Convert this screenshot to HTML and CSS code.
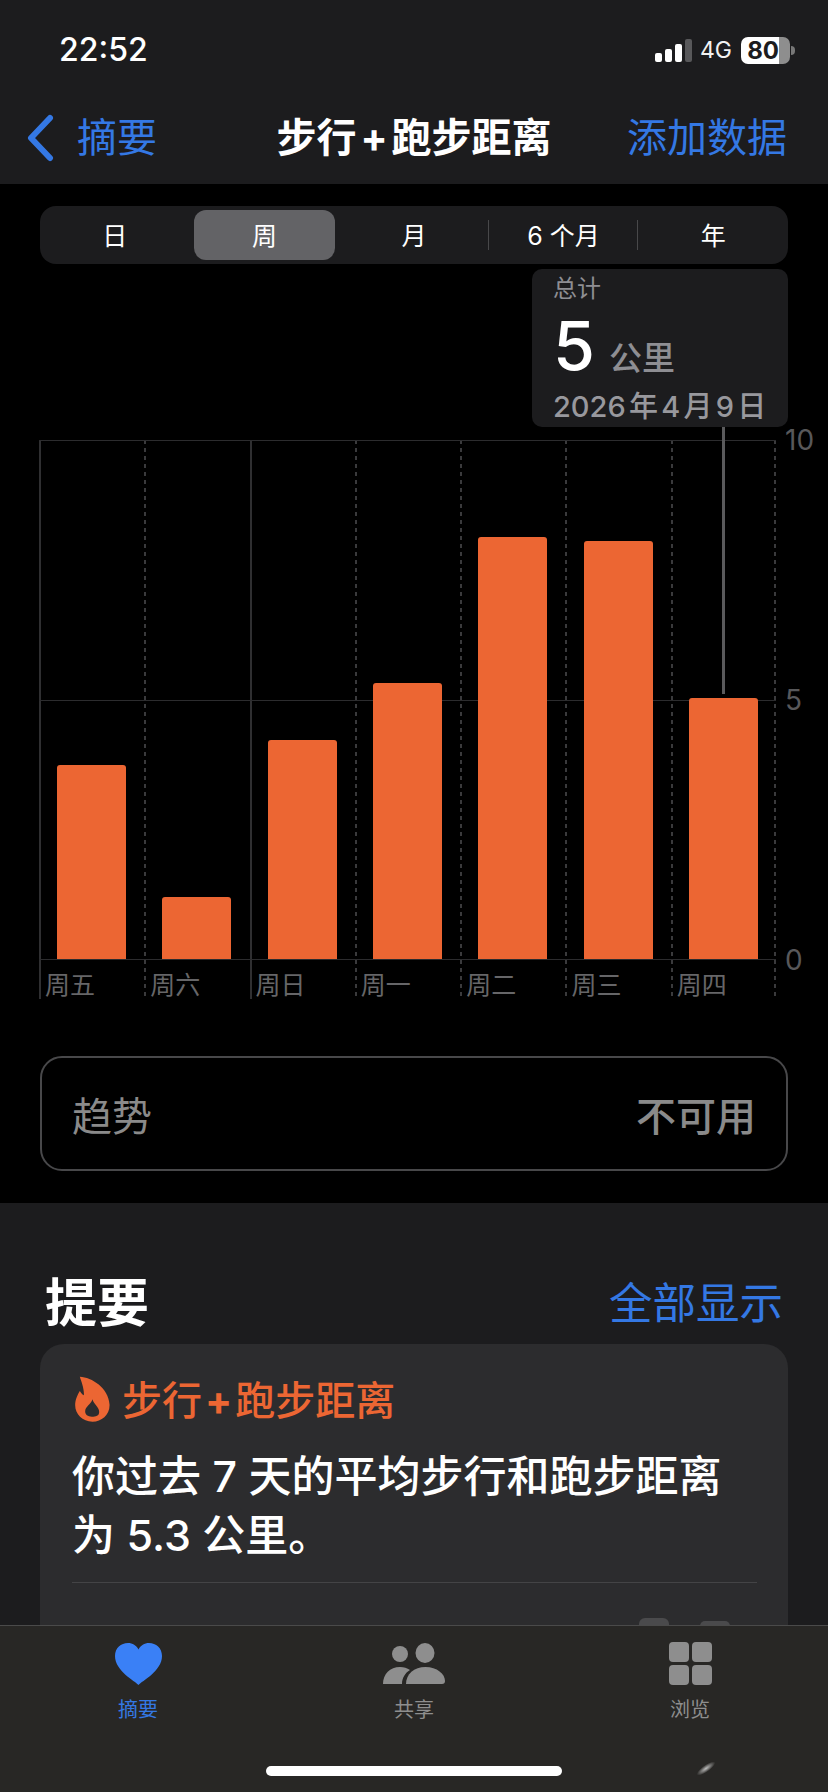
FILE: index.html
```html
<!DOCTYPE html>
<html lang="zh">

<head>
  <title>步行+跑步距离</title>
  <link rel="stylesheet" href="styles.css">
</head>

<body>
  <header class="top-bar">
    <div class="status-bar">
      <span class="clock">22:52</span>
      <div class="status-icons">
        <div class="signal">
          <i class="sig-1"></i>
          <i class="sig-2"></i>
          <i class="sig-3"></i>
          <i class="sig-4"></i>
        </div>
        <span class="network">4G</span>
        <div class="battery">
          <span class="battery-level">80</span>
          <i class="battery-rest"></i>
        </div>
        <i class="battery-nub"></i>
      </div>
    </div>

    <nav class="nav-bar">
      <a class="back-link">
        <svg class="chevron" viewBox="0 0 30 48" width="30" height="48">
          <path d="M25 4 L6 24 L25 44" fill="none" stroke="#3478e4" stroke-width="6" stroke-linecap="round" stroke-linejoin="round" />
        </svg>
        <span>摘要</span>
      </a>
      <h1 class="nav-title">步行<b class="plus">+</b>跑步距离</h1>
      <a class="add-link">添加数据</a>
    </nav>
  </header>

  <main class="chart-section">
    <div class="segments">
      <span class="segment">日</span>
      <span class="segment active">周</span>
      <span class="segment">月</span>
      <span class="segment divided">6 个月</span>
      <span class="segment divided">年</span>
    </div>

    <div class="chart">
      <div class="tooltip">
        <p class="tip-label">总计</p>
        <p class="tip-value"><span class="tip-number">5</span><span class="tip-unit">公里</span></p>
        <p class="tip-date">2026 年 4 月 9 日</p>
      </div>
      <i class="tip-line"></i>

      <div class="plot">
        <div class="day solid">
          <div class="bar-area"><div class="bar" style="height: 194px"></div></div>
          <span class="day-name">周五</span>
        </div>
        <div class="day">
          <div class="bar-area"><div class="bar" style="height: 62px"></div></div>
          <span class="day-name">周六</span>
        </div>
        <div class="day solid">
          <div class="bar-area"><div class="bar" style="height: 219px"></div></div>
          <span class="day-name">周日</span>
        </div>
        <div class="day">
          <div class="bar-area"><div class="bar" style="height: 276px"></div></div>
          <span class="day-name">周一</span>
        </div>
        <div class="day">
          <div class="bar-area"><div class="bar" style="height: 422px"></div></div>
          <span class="day-name">周二</span>
        </div>
        <div class="day">
          <div class="bar-area"><div class="bar" style="height: 418px"></div></div>
          <span class="day-name">周三</span>
        </div>
        <div class="day last">
          <div class="bar-area"><div class="bar" style="height: 261px"></div></div>
          <span class="day-name">周四</span>
        </div>
      </div>

      <div class="axis">
        <span>10</span>
        <span>5</span>
        <span>0</span>
      </div>
    </div>

    <div class="trend">
      <span>趋势</span>
      <span class="trend-value">不可用</span>
    </div>
  </main>

  <section class="summary">
    <div class="summary-head">
      <h2>提要</h2>
      <a class="show-all">全部显示</a>
    </div>

    <div class="card">
      <div class="card-title">
        <svg class="flame" viewBox="0 0 104 138" width="35" height="46">
          <path fill-rule="evenodd" fill="#ec6633" d="M14 2 C50 4 100 35 103 85 C105 115 80 137 52 137 C22 137 0 115 0 88 C0 70 8 55 14 45 C18 52 22 56 26 58 C28 40 18 15 14 2 Z M52 70 C55 85 72 92 72 108 C72 120 62 122 50 122 C38 122 30 116 30 106 C30 92 48 85 52 70 Z" />
        </svg>
        <span>步行<b class="plus">+</b>跑步距离</span>
      </div>
      <p class="card-text">你过去 7 天的平均步行和跑步距离<br>为 5.3 公里。</p>
      <div class="card-rule"></div>
      <div class="mini-bars">
        <i class="mini-bar"></i>
        <i class="mini-bar short"></i>
      </div>
    </div>
  </section>

  <footer class="tab-bar">
    <a class="tab current">
      <svg viewBox="0 0 47 42" width="47" height="42">
        <path fill="#3a80f6" d="M23.500 42 C20 38 0 28 0 13 C0 5 6 0 13 0 C17.500 0 21.500 2.500 23.500 6.500 C25.500 2.500 29.500 0 34 0 C41 0 47 5 47 13 C47 28 27 38 23.500 42 Z" />
      </svg>
      <span>摘要</span>
    </a>
    <a class="tab">
      <svg viewBox="0 0 62 42" width="62" height="42">
        <circle cx="17" cy="11" r="8" fill="#8e8e8e" />
        <ellipse cx="42" cy="10" rx="9.500" ry="10" fill="#8e8e8e" />
        <path fill="#8e8e8e" d="M0 41 C0 31 7 24 17 24 C21 24 24 25 27 27 C22 30 19 35 19 41 Z" />
        <path fill="#8e8e8e" d="M23 41 C23 31 31 24 42.500 24 C54 24 62 31 62 38 C62 40 61 41 59 41 Z" />
      </svg>
      <span>共享</span>
    </a>
    <a class="tab">
      <div class="grid-icon">
        <i></i><i></i><i></i><i></i>
      </div>
      <span>浏览</span>
    </a>
    <i class="home-bar"></i>
    <i class="glint"></i>
  </footer>
</body>

</html>
```

FILE: styles.css
```css
* {
  box-sizing: border-box;
  font-family: Inter, "Noto Sans CJK SC", sans-serif;
}

html,
body {
  margin: 0;
  height: 1792px;
  overflow: hidden;
  background-color: #1c1c1e;
  color: white;
}

p,
h1,
h2 {
  margin: 0;
}

i {
  display: block;
}

/* top of the screen */
.top-bar {
  height: 184px;
  background-color: #1c1c1e;
}

.status-bar {
  height: 100px;
  padding: 30px 33px 0 59px;
  display: flex;
  justify-content: space-between;
  align-items: flex-start;
}

.clock {
  font-size: 32px;
  font-weight: 500;
  line-height: 40px;
}

.status-icons {
  display: flex;
  align-items: center;
  height: 40px;
}

.signal {
  display: flex;
  align-items: flex-end;
  gap: 3px;
  height: 23px;
  margin-top: 1px;
}

.signal i {
  width: 7px;
  background-color: white;
  border-radius: 2px;
}

.sig-1 {
  height: 9px;
}

.sig-2 {
  height: 13px;
}

.sig-3 {
  height: 18px;
}

.signal .sig-4 {
  height: 23px;
  background-color: #58585a;
}

.network {
  font-size: 23px;
  margin-left: 8px;
  color: #f2f2f2;
}

.battery {
  display: flex;
  width: 49px;
  height: 27px;
  margin-left: 9px;
}

.battery-level {
  width: 38px;
  background-color: white;
  color: #1c1c1e;
  border-radius: 7px 0 0 7px;
  font-size: 24px;
  font-weight: 700;
  line-height: 27px;
  text-align: right;
}

.battery-rest {
  flex-grow: 1;
  background-color: #8e8e8e;
  border-radius: 0 7px 7px 0;
}

.battery-nub {
  width: 4px;
  height: 9px;
  margin-left: 1px;
  background-color: #777;
  border-radius: 0 4px 4px 0;
}

.nav-bar {
  height: 84px;
  display: grid;
  grid-template-columns: 1fr auto 1fr;
  align-items: start;
  padding: 13px 41px 0;
}

.back-link {
  display: flex;
  align-items: center;
  gap: 22px;
  margin-left: -16px;
  color: #3478e4;
  font-size: 40px;
  line-height: 50px;
}

.chevron {
  flex-shrink: 0;
}

.nav-title {
  font-size: 40px;
  font-weight: 600;
  line-height: 50px;
}

.plus {
  font-weight: 700;
  margin: 0 4px;
}

.add-link {
  justify-self: end;
  color: #3478e4;
  font-size: 40px;
  line-height: 50px;
}

/* black part with the chart */
.chart-section {
  height: 1019px;
  background-color: black;
  padding: 22px 40px 0;
}

.segments {
  display: grid;
  grid-template-columns: repeat(5, 1fr);
  height: 58px;
  background-color: #1c1c1e;
  border-radius: 16px;
  padding: 4px 0;
}

.segment {
  display: flex;
  align-items: center;
  justify-content: center;
  padding-bottom: 3px;
  font-size: 25px;
  position: relative;
  margin: 0 4px;
  border-radius: 12px;
}

.segment.active {
  background-color: #636366;
}

.segment.divided::before {
  content: "";
  position: absolute;
  left: -5px;
  top: 10px;
  bottom: 10px;
  width: 1px;
  background-color: #48484a;
}

.chart {
  position: relative;
  display: flex;
  margin-top: 176px;
  margin-left: -1px;
}

.tooltip {
  position: absolute;
  left: 493px;
  top: -171px;
  width: 256px;
  height: 158px;
  background-color: #1c1c1e;
  border-radius: 10px;
  padding: 0 21px;
  z-index: 2;
}

.tip-label {
  font-size: 24px;
  line-height: 34px;
  margin-top: 3px;
  color: #8e8e93;
}

.tip-value {
  display: flex;
  align-items: baseline;
  gap: 14px;
  line-height: 78px;
  height: 78px;
}

.tip-number {
  font-size: 68px;
  font-weight: 500;
}

.tip-unit {
  font-size: 33px;
  font-weight: 500;
  color: #8e8e93;
}

.tip-date {
  margin-top: 5px;
  font-size: 29px;
  font-weight: 500;
  line-height: 36px;
  color: #98989d;
  word-spacing: -4.500px;
  white-space: nowrap;
}

.tip-line {
  position: absolute;
  left: 683px;
  top: -13px;
  width: 3px;
  height: 267px;
  background-color: #5a5a5c;
  z-index: 1;
}

.plot {
  display: grid;
  grid-template-columns: repeat(7, 1fr);
  width: 737px;
  flex-shrink: 0;
}

/* day separators: 4px dashes, a plain line where the week marks change */
.day {
  height: 559px;
  background-image: repeating-linear-gradient(#3a3a3c 0 4px, transparent 4px 8px);
  background-size: 2px 100%;
  background-repeat: no-repeat;
}

.day.solid {
  background-image: linear-gradient(#2f2f31, #2f2f31);
}

.day.last {
  background-image: repeating-linear-gradient(#3a3a3c 0 4px, transparent 4px 8px), repeating-linear-gradient(#3a3a3c 0 4px, transparent 4px 8px);
  background-position: left top, right top;
}

.bar-area {
  height: 520px;
  display: flex;
  align-items: flex-end;
  justify-content: center;
  border-top: 1px solid #2c2c2e;
  border-bottom: 1px solid #2c2c2e;
  background-image: linear-gradient(#2c2c2e, #2c2c2e);
  background-size: 100% 1px;
  background-position: 0 259px;
  background-repeat: no-repeat;
}

.bar {
  width: 69px;
  background-color: #ec6633;
  border-radius: 3px 3px 0 0;
}

.day-name {
  display: block;
  padding-left: 6px;
  font-size: 25px;
  line-height: 50px;
  color: #666668;
}

.axis {
  display: flex;
  flex-direction: column;
  justify-content: space-between;
  height: 550px;
  margin-top: -15px;
  margin-left: 9px;
  font-size: 28px;
  line-height: 30px;
  color: #58585a;
}

.trend {
  display: flex;
  justify-content: space-between;
  align-items: center;
  height: 115px;
  margin-top: 57px;
  padding: 0 30px;
  border: 2px solid #48484a;
  border-radius: 22px;
  font-size: 40px;
  color: #8a8a8a;
}

.trend-value {
  font-weight: 500;
}

/* summary below the chart */
.summary {
  padding: 70px 40px 0;
}

.summary-head {
  display: flex;
  justify-content: space-between;
  align-items: center;
  height: 62px;
  padding: 0 5px;
}

.summary-head h2 {
  font-size: 52px;
  font-weight: 700;
  line-height: 62px;
}

.show-all {
  font-size: 43.500px;
  line-height: 56px;
  margin-bottom: 3px;
  color: #3478e4;
}

.card {
  margin-top: 9px;
  height: 400px;
  background-color: #2c2c2e;
  border-radius: 24px;
  padding: 33px 31px 0 32px;
}

.card-title {
  display: flex;
  align-items: center;
  gap: 12px;
  font-size: 40px;
  font-weight: 500;
  color: #ec6633;
  line-height: 48px;
}

.card-title .plus {
  margin: 0 3px;
}

.flame {
  flex-shrink: 0;
  margin: -4px 0 0 3px;
}

.card-text {
  margin-top: 22px;
  font-size: 43px;
  font-weight: 500;
  line-height: 59px;
  white-space: nowrap;
}

.card-rule {
  height: 1px;
  margin-top: 17px;
  background-color: #444446;
}

.mini-bars {
  display: flex;
  justify-content: flex-end;
  align-items: flex-end;
  gap: 31px;
  height: 43px;
  margin-right: 27px;
}

.mini-bar {
  width: 30px;
  height: 8px;
  background-color: #4a4a4c;
  border-radius: 6px 6px 0 0;
}

.mini-bar.short {
  height: 5px;
}

/* tabs along the bottom */
.tab-bar {
  position: absolute;
  left: 0;
  right: 0;
  top: 1625px;
  height: 167px;
  display: flex;
  background-color: #282725;
  border-top: 1px solid #4a4a4a;
  padding: 17px 38px 0;
  justify-content: space-between;
}

.tab {
  width: 200px;
  display: flex;
  flex-direction: column;
  align-items: center;
  gap: 11px;
  font-size: 20px;
  line-height: 28px;
  color: #8e8e8e;
}

.tab.current {
  color: #3478e4;
}

.tab svg {
  display: block;
  flex-shrink: 0;
}

.grid-icon {
  display: grid;
  grid-template-columns: 20px 20px;
  grid-template-rows: 20px 20px;
  gap: 3px;
  height: 43px;
  margin-top: -1px;
}

.grid-icon i {
  background-color: #8e8e8e;
  border-radius: 4px;
}

.home-bar {
  position: absolute;
  left: 266px;
  top: 140px;
  width: 296px;
  height: 10px;
  border-radius: 5px;
  background-color: white;
}

.glint {
  position: absolute;
  left: 695px;
  top: 139px;
  width: 22px;
  height: 7px;
  border-radius: 50%;
  background: radial-gradient(closest-side, rgba(255, 255, 255, 0.7), rgba(255, 255, 255, 0));
  transform: rotate(-35deg);
}
```
